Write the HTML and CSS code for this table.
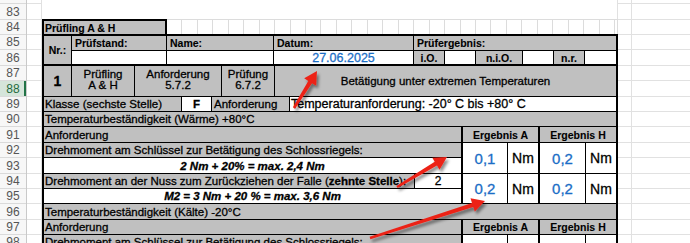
FILE: index.html
```html
<!DOCTYPE html>
<html lang="de">
<head>
    <meta charset="UTF-8">
    <meta name="viewport" content="width=device-width, initial-scale=1.0">
    <title>Prüfling A &amp; H</title>
    <link rel="stylesheet" href="styles.css">
</head>
<body>
    <div class="sheet">
        <!-- Zeilenköpfe -->
        <div class="heads">
            <div>82</div><div class="t">83</div><div>84</div><div>85</div><div class="t">86</div>
            <div>87</div><div class="t sel">88</div><div>89</div><div>90</div><div class="t">91</div>
            <div>92</div><div class="t">93</div><div>94</div><div>95</div><div class="t">96</div>
            <div>97</div><div>98</div>
        </div>

        <!-- Spalte A, leer -->
        <div class="side col-a">
            <div></div><div class="t"></div><div></div><div></div><div class="t"></div>
            <div></div><div class="t"></div><div></div><div></div><div class="t"></div>
            <div></div><div class="t"></div><div></div><div></div><div class="t"></div>
            <div></div><div></div>
        </div>

        <div class="main">
            <div class="pad"></div>
            <div class="r84">
                <div class="cell g b title">Prüfling A &amp; H</div>
                <div class="blank"></div>
            </div>

            <div class="frame">
                <!-- Kopf: Nr., Prüfstand, Name, Datum, Prüfergebnis -->
                <div class="blk-head">
                    <div class="cell g b c w-nr">Nr.:</div>
                    <div class="stack">
                        <div class="row r85">
                            <div class="cell g b w-stand">Prüfstand:</div>
                            <div class="cell g b w-name">Name:</div>
                            <div class="cell g b w-datum">Datum:</div>
                            <div class="cell g b fill">Prüfergebnis:</div>
                        </div>
                        <div class="row r86">
                            <div class="cell w-stand"></div>
                            <div class="cell w-name"></div>
                            <div class="cell c w-datum date">27.06.2025</div>
                            <div class="cell g b c w-io">i.O.</div>
                            <div class="cell w-io"></div>
                            <div class="cell g b c w-nio">n.i.O.</div>
                            <div class="cell w-io"></div>
                            <div class="cell g b c w-io">n.r.</div>
                            <div class="cell fill"></div>
                        </div>
                    </div>
                </div>

                <!-- Prüfling / Anforderung / Prüfung -->
                <div class="row blk-test">
                    <div class="cell g c w-nr one">1</div>
                    <div class="cell g c w-pr"><span>Prüfling<br>A &amp; H</span></div>
                    <div class="cell g c w-anf"><span>Anforderung<br>5.7.2</span></div>
                    <div class="cell g c w-pg"><span>Prüfung<br>6.7.2</span></div>
                    <div class="cell g c fill">Betätigung unter extremen Temperaturen</div>
                </div>

                <div class="row r89">
                    <div class="cell g w-klasse">Klasse (sechste Stelle)</div>
                    <div class="cell c w-f">F</div>
                    <div class="cell g w-anf2">Anforderung</div>
                    <div class="cell fill big">Temperaturanforderung: -20° C bis +80° C</div>
                </div>

                <div class="row r90">
                    <div class="cell g fill">Temperaturbeständigkeit (Wärme) +80°C</div>
                </div>

                <div class="row r91">
                    <div class="cell g w-left">Anforderung</div>
                    <div class="cell g b c w-erg">Ergebnis A</div>
                    <div class="cell g b c fill">Ergebnis H</div>
                </div>

                <div class="row blk-values">
                    <div class="left">
                        <div class="row l1"><div class="cell g fill">Drehmoment am Schlüssel zur Betätigung des Schlossriegels:</div></div>
                        <div class="row l2"><div class="cell fill c formula">2 Nm + 20% = max. 2,4 Nm</div></div>
                        <div class="row l1">
                            <div class="cell g w-nuss">Drehmoment an der Nuss zum Zurückziehen der Falle (<b>zehnte Stelle</b>):</div>
                            <div class="cell c fill digit">2</div>
                        </div>
                        <div class="row l3"><div class="cell fill c formula">M2 = 3 Nm + 20 % = max. 3,6 Nm</div></div>
                    </div>
                    <div class="res w-erg">
                        <div class="row v1"><div class="cell c w-val num">0,1</div><div class="cell c fill unit">Nm</div></div>
                        <div class="row v2"><div class="cell c w-val num">0,2</div><div class="cell c fill unit">Nm</div></div>
                    </div>
                    <div class="res fill">
                        <div class="row v1"><div class="cell c w-val2 num">0,2</div><div class="cell c fill unit">Nm</div></div>
                        <div class="row v2"><div class="cell c w-val2 num">0,2</div><div class="cell c fill unit">Nm</div></div>
                    </div>
                </div>

                <div class="row r96">
                    <div class="cell g fill">Temperaturbeständigkeit (Kälte) -20°C</div>
                </div>

                <div class="row r97">
                    <div class="cell g w-left">Anforderung</div>
                    <div class="cell g b c w-erg">Ergebnis A</div>
                    <div class="cell g b c fill">Ergebnis H</div>
                </div>

                <div class="row blk-values">
                    <div class="left">
                        <div class="row l1"><div class="cell g fill">Drehmoment am Schlüssel zur Betätigung des Schlossriegels:</div></div>
                    </div>
                    <div class="res w-erg">
                        <div class="row v1"><div class="cell w-val"></div><div class="cell fill"></div></div>
                    </div>
                    <div class="res fill">
                        <div class="row v1"><div class="cell w-val2"></div><div class="cell fill"></div></div>
                    </div>
                </div>
            </div>
        </div>

        <!-- Spalten rechts der Tabelle -->
        <div class="side col-out">
            <div></div><div class="t"></div><div></div><div></div><div class="t"></div>
            <div></div><div class="t"></div><div></div><div></div><div class="t"></div>
            <div></div><div class="t"></div><div></div><div></div><div class="t"></div>
            <div></div><div></div>
        </div>
    </div>

    <!-- Markierungspfeile -->
    <svg class="marks" width="690" height="243" viewBox="0 0 690 243">
        <defs>
            <filter id="shade" x="-20%" y="-20%" width="140%" height="140%">
                <feDropShadow dx="2" dy="3" stdDeviation="1.6" flood-color="#000" flood-opacity="0.45"/>
            </filter>
        </defs>
        <g fill="#ec2318" filter="url(#shade)">
            <polygon points="295.1,108.7 312,83.2 316.1,85.7 317,71 304.2,78.3 308.3,80.9 292.9,107.3"/>
            <polygon points="397.7,188.1 437,165.6 439.5,169.7 447,157 432.3,157.7 434.7,161.8 396.3,185.9"/>
            <polygon points="370.4,239.2 473.3,207.1 474.8,211.6 485,201 470.5,198.3 472,202.9 369.6,236.8"/>
        </g>
    </svg>
</body>
</html>
```

FILE: styles.css
```css
body {
    margin: 0;
    background: #fff;
    font-family: "Liberation Sans", Arial, sans-serif;
    color: #000;
    overflow: hidden;
}
.sheet {
    display: flex;
    height: 243px;
    overflow: hidden;
}

/* Zeilenköpfe links */
.heads {
    width: 27px;
    flex: none;
    margin-top: -11px;
    background: #f7f7f7;
    border-right: 1px solid #c9c9c9;
    box-sizing: border-box;
}
.heads div {
    height: 15px;
    line-height: 15px;
    border-bottom: 1px solid #dadada;
    box-sizing: border-box;
    text-align: center;
    font-size: 12px;
    color: #555;
}
.heads div.t {
    height: 16px;
    line-height: 16px;
}
.heads div.sel {
    background: #d5e5da;
    color: #1f6b3f;
    box-shadow: inset -2px 0 #217346;
}

/* leere Tabellenspalten */
.side {
    flex: none;
    margin-top: -11px;
}
.side div {
    height: 15px;
    border-bottom: 1px solid #e1e1e1;
    box-sizing: border-box;
}
.side div.t {
    height: 16px;
}
.col-a {
    width: 15px;
    border-right: 1px solid #e1e1e1;
    box-sizing: border-box;
}
.col-out {
    flex: 1;
}
.col-out div {
    background: linear-gradient(90deg, transparent 13px, #e1e1e1 13px 14px, transparent 14px);
}

.main {
    width: 576px;
    flex: none;
    -webkit-text-stroke: 0.3px currentColor;
}
.pad {
    height: 19px;
    border-right: 1px solid #e1e1e1;
    box-sizing: border-box;
}
.r84 {
    display: flex;
    height: 15px;
}
.r84 .title {
    width: 125px;
    border: 2px solid #000;
    border-bottom: 0;
    padding-left: 1px;
}
.blank {
    flex: 1;
    border-top: 1px solid #dcdcdc;
    border-right: 1px solid #dcdcdc;
    background: repeating-linear-gradient(90deg, transparent 0 14.45px, #dcdcdc 14.45px 15.45px);
    box-sizing: border-box;
}

.frame {
    border: 2px solid #000;
}
.row {
    display: flex;
    border-bottom: 1px solid #000;
    box-sizing: border-box;
}
.cell {
    display: flex;
    align-items: center;
    box-sizing: border-box;
    border-right: 1px solid #000;
    padding: 0 1px;
    font-size: 11.5px;
    white-space: nowrap;
    overflow: hidden;
    background: #fff;
}
.cell:last-child {
    border-right: 0;
}
.g {
    background: #c0c0c0;
}
.b {
    font-weight: bold;
    font-size: 10.5px;
    -webkit-text-stroke: 0.1px currentColor;
}
.c {
    justify-content: center;
}
.fill {
    flex: 1;
}

/* Kopfblock */
.blk-head {
    display: flex;
    height: 30px;
    border-bottom: 2px solid #000;
    box-sizing: border-box;
}
.stack {
    flex: 1;
    display: flex;
    flex-direction: column;
}
.r85 {
    height: 15px;
}
.r85 .cell {
    padding-left: 3px;
    align-items: flex-start;
    padding-top: 1px;
}
.r86 {
    height: 13px;
    border-bottom: 0;
}
.w-nr { width: 28px; }
.w-stand { width: 95px; }
.w-name { width: 107px; }
.w-datum { width: 140px; }
.w-io { width: 31px; }
.w-nio { width: 47px; }
.date {
    color: #1b6ec6;
    font-size: 12.5px;
}

/* Prüfling / Anforderung / Prüfung */
.blk-test {
    height: 31px;
}
.blk-test span {
    text-align: center;
    line-height: 11.5px;
    padding-bottom: 2px;
}
.one {
    font-size: 14px;
    font-weight: bold;
}
.w-pr { width: 63px; }
.w-anf { width: 87px; }
.w-pg { width: 53px; }

.r89 {
    height: 15px;
}
.w-klasse { width: 138px; }
.w-f {
    width: 30px;
    font-weight: bold;
}
.w-anf2 {
    width: 78px;
    padding-left: 2px;
}
.big {
    font-size: 12.5px;
}
.r90 {
    height: 15px;
}
.r91, .r96 {
    height: 16px;
}
.r97 {
    height: 15px;
}
.w-left {
    width: 419px;
    border-right-width: 2px;
}
.w-erg {
    width: 77px;
    border-right: 2px solid #000;
    box-sizing: border-box;
}

/* Messwerte */
.blk-values {
    height: 61px;
}
.left {
    width: 419px;
    border-right: 2px solid #000;
    box-sizing: border-box;
    display: flex;
    flex-direction: column;
}
.l1 { height: 15px; }
.l2 { height: 16px; }
.l3 {
    height: 14px;
    border-bottom: 0;
}
.w-nuss { width: 371px; }
.formula {
    font-weight: bold;
    font-style: italic;
}
.digit {
    font-size: 12px;
}
.res {
    display: flex;
    flex-direction: column;
}
.v1 { height: 31px; }
.v2 {
    height: 29px;
    border-bottom: 0;
}
.w-val { width: 45px; }
.w-val2 { width: 46px; }
.num {
    color: #1b6ec6;
    font-size: 15px;
}
.unit {
    font-size: 14px;
}

.marks {
    position: absolute;
    top: 0;
    left: 0;
    pointer-events: none;
}
```
